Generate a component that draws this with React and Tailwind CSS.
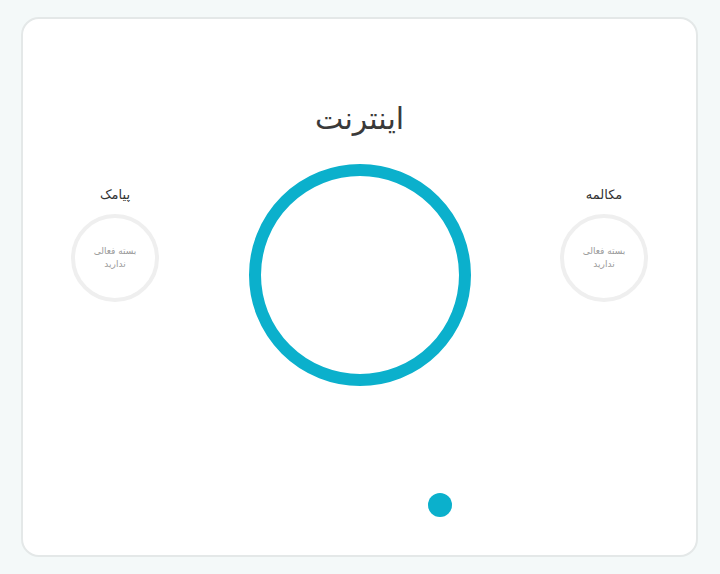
const sideItems = [
  { label: 'پیامک' },
  { label: 'مکالمه' },
]

function SideGauge({ label }) {
  return (
    <div className="flex flex-col items-center mt-[23px] w-[88px]">
      <span className="text-[13px] leading-4 text-[#333]">{label}</span>
      <div className="mt-[11px] w-[88px] h-[88px] rounded-full border-4 border-[#efefef] flex flex-col items-center justify-center text-[9px] leading-[13px] text-[#9a9a9a]">
        <span>بسته فعالی</span>
        <span>ندارید</span>
      </div>
    </div>
  )
}

export default function App() {
  return (
    <div
      dir="rtl"
      className="w-[720px] h-[574px] bg-[#f4f9f9] pt-[17px] pl-[21px] pr-[22px]"
      style={{ fontFamily: '"DejaVu Sans", "Noto Sans", sans-serif' }}
    >
      <div className="h-[540px] bg-white border-2 border-[#e4e8e8] rounded-[18px] flex flex-col items-center pt-[80px]">
        <h1 className="text-[30px] leading-10 text-[#3a3a3a] font-normal">اینترنت</h1>

        <div className="w-full flex justify-between items-start px-[48px] mt-[25px]" dir="ltr">
          <SideGauge label={sideItems[0].label} />
          <div className="w-[222px] h-[222px] rounded-full border-[12px] border-[#0bb0cc]" />
          <SideGauge label={sideItems[1].label} />
        </div>

        <div className="w-full flex justify-center mt-[107px]" dir="ltr">
          <div className="ml-[160px] w-6 h-6 rounded-full bg-[#0bb0cc]" />
        </div>
      </div>
    </div>
  )
}
